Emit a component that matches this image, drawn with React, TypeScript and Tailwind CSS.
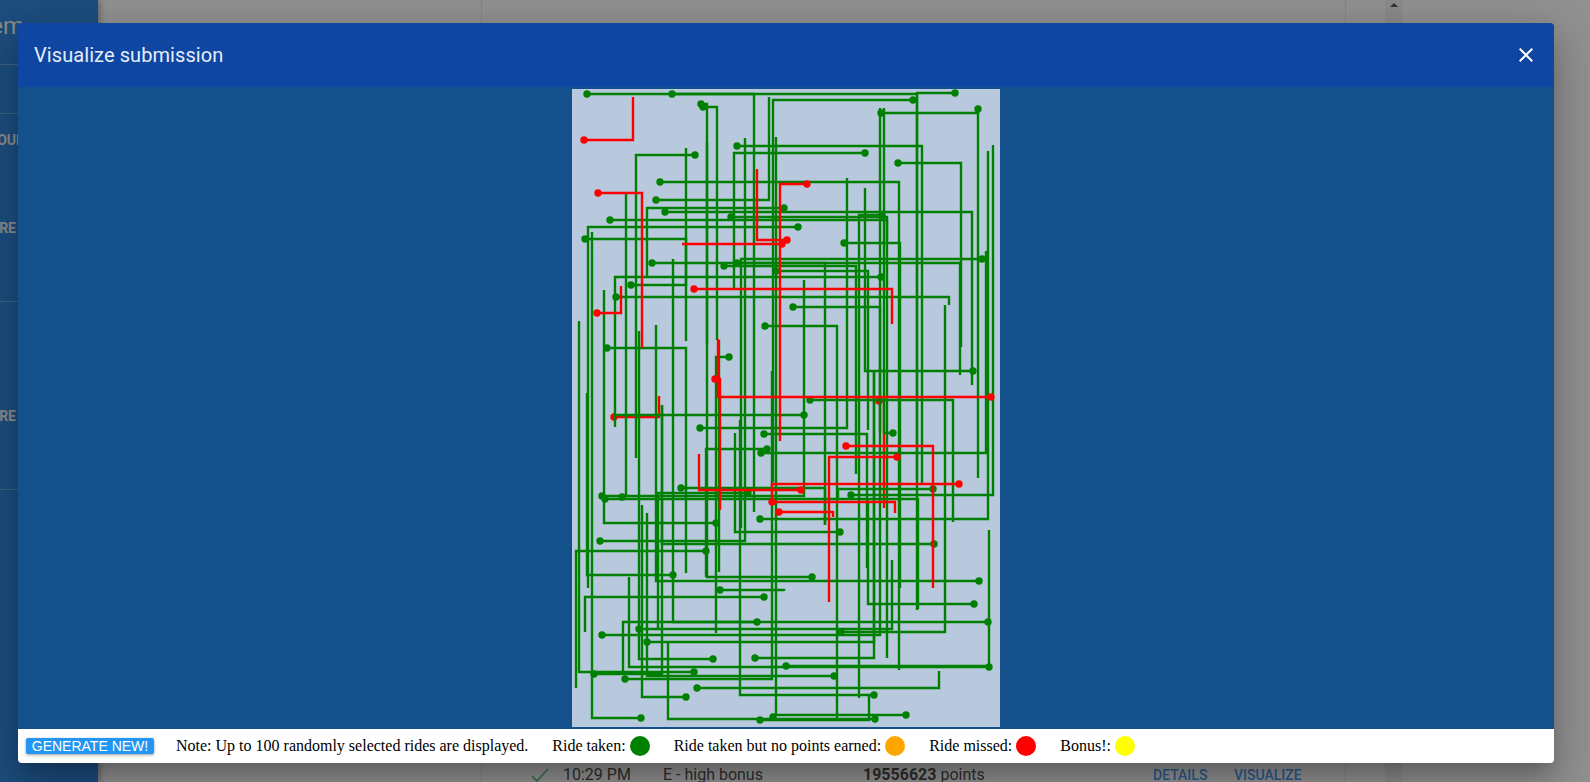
const GREEN_RIDES: number[][] = [
  [587, 94, 754, 512],
  [672, 94, 917, 610],
  [955, 93, 917, 480],
  [913, 100, 773, 482],
  [656, 200, 769, 97],
  [703, 107, 717, 340],
  [701, 104, 707, 344],
  [812, 577, 707, 143],
  [600, 541, 745, 138],
  [881, 113, 978, 478],
  [978, 109, 978, 113],
  [865, 153, 734, 288],
  [695, 155, 636, 458],
  [737, 146, 922, 485],
  [898, 163, 961, 347],
  [906, 715, 776, 137],
  [660, 182, 899, 670],
  [700, 428, 847, 178],
  [973, 371, 865, 188],
  [665, 212, 972, 385],
  [610, 220, 887, 658],
  [731, 217, 887, 240],
  [882, 215, 859, 698],
  [798, 227, 588, 588],
  [585, 239, 686, 341],
  [631, 285, 686, 148],
  [641, 718, 592, 232],
  [844, 243, 900, 588],
  [652, 263, 960, 375],
  [982, 259, 741, 528],
  [724, 266, 856, 474],
  [737, 263, 825, 525],
  [776, 271, 868, 430],
  [784, 208, 647, 277],
  [616, 297, 949, 305],
  [793, 307, 880, 432],
  [765, 326, 837, 718],
  [607, 348, 686, 573],
  [729, 357, 716, 633],
  [810, 400, 953, 522],
  [804, 415, 616, 415],
  [764, 434, 867, 568],
  [893, 433, 884, 108],
  [767, 449, 706, 577],
  [761, 453, 986, 251],
  [681, 488, 825, 525],
  [933, 489, 838, 500],
  [851, 495, 993, 145],
  [602, 496, 804, 280],
  [605, 499, 918, 609],
  [622, 497, 622, 497],
  [748, 493, 658, 628],
  [760, 519, 988, 151],
  [716, 523, 604, 290],
  [840, 532, 735, 433],
  [934, 544, 662, 405],
  [706, 551, 576, 688],
  [673, 575, 587, 393],
  [979, 581, 656, 325],
  [720, 590, 784, 591],
  [764, 597, 585, 632],
  [974, 604, 868, 500],
  [988, 622, 623, 675],
  [757, 622, 673, 259],
  [786, 666, 989, 530],
  [989, 667, 629, 577],
  [639, 629, 892, 560],
  [602, 635, 880, 108],
  [841, 632, 945, 305],
  [647, 642, 874, 372],
  [755, 658, 874, 372],
  [713, 659, 639, 331],
  [694, 672, 579, 321],
  [834, 676, 647, 513],
  [594, 674, 662, 405],
  [625, 679, 772, 371],
  [697, 688, 939, 671],
  [874, 695, 740, 420],
  [686, 697, 642, 505],
  [760, 720, 869, 696],
  [773, 717, 775, 717],
  [875, 719, 668, 641],
];

// rides whose first leg is a longer path
const GREEN_PATHS = ["881,277 615,277 615,427"];
const GREEN_DOTS = [[881, 277]];

// verticals whose dot is hidden under something else
const GREEN_STUBS: number[][] = [
  [626, 194, 497],
  [719, 340, 572],
];

const RED_UNDER: number[][] = [
  [614, 417, 659, 396],
  [879, 401, 884, 508],
];

const RED_RIDES: number[][] = [
  [584, 140, 633, 97],
  [807, 184, 780, 441],
  [787, 240, 757, 169],
  [782, 244, 682, 244],
  [598, 193, 642, 348],
  [694, 289, 892, 324],
  [597, 313, 621, 286],
  [991, 397, 718, 339],
  [715, 379, 720, 510],
  [846, 446, 933, 588],
  [897, 457, 829, 602],
  [801, 490, 699, 454],
  [959, 484, 772, 502],
  [772, 502, 895, 513],
  [779, 512, 833, 517],
];

function Ride({ ride, color }: { ride: number[]; color: string }) {
  const [x0, y0, x1, y1] = ride;
  return (
    <g>
      <polyline
        points={`${x0},${y0} ${x1},${y0} ${x1},${y1}`}
        fill="none"
        stroke={color}
        strokeWidth={2.4}
      />
      <circle cx={x0} cy={y0} r={3.7} fill={color} />
    </g>
  );
}

function RidesCanvas() {
  return (
    <svg
      viewBox="572 89 428 638"
      className="w-[428px] h-[638px] bg-[#b9c9dd] block"
    >
      {RED_UNDER.map((r, i) => (
        <Ride key={i} ride={r} color="#ff0000" />
      ))}
      {GREEN_RIDES.map((r, i) => (
        <Ride key={i} ride={r} color="#008000" />
      ))}
      {GREEN_STUBS.map(([x, a, b], i) => (
        <line key={i} x1={x} y1={a} x2={x} y2={b} stroke="#008000" strokeWidth={2.4} />
      ))}
      {GREEN_PATHS.map((p, i) => (
        <polyline key={i} points={p} fill="none" stroke="#008000" strokeWidth={2.4} />
      ))}
      {GREEN_DOTS.map(([x, y], i) => (
        <circle key={i} cx={x} cy={y} r={3.7} fill="#008000" />
      ))}
      {RED_RIDES.map((r, i) => (
        <Ride key={i} ride={r} color="#ff0000" />
      ))}
    </svg>
  );
}

function LegendItem({ label, color }: { label: string; color: string }) {
  return (
    <div className="flex items-center gap-[4px]">
      <span>{label}</span>
      <span className={`w-[20px] h-[20px] rounded-full ${color}`} />
    </div>
  );
}

function SidebarText({ children, className }: { children: string; className: string }) {
  return (
    <div className={`flex justify-end whitespace-nowrap text-[#8c8c8c] ${className}`}>
      {children}
    </div>
  );
}

function Sidebar() {
  return (
    <div className="w-[98px] shrink-0 h-full bg-[#1c4e7f] shadow-[2px_0_6px_rgba(0,0,0,0.3)] font-['Roboto',sans-serif]">
      <div className="h-[65px] border-b border-[#3f6488] pt-[11px]">
        <SidebarText className="w-[24px] text-[24px] leading-[30px]">System</SidebarText>
      </div>
      <div className="h-[49px] border-b border-[#3f6488]" />
      <div className="h-[188px] border-b border-[#3f6488] pt-[18px]">
        <SidebarText className="w-[25px] text-[14px] leading-[16px] font-bold">YOUR</SidebarText>
        <div className="h-[72px]" />
        <SidebarText className="w-[16px] text-[14px] leading-[16px] font-bold">MORE</SidebarText>
      </div>
      <div className="h-[188px] border-b border-[#3f6488] pt-[106px]">
        <SidebarText className="w-[16px] text-[14px] leading-[16px] font-bold">MORE</SidebarText>
      </div>
    </div>
  );
}

function SubmissionRow() {
  return (
    <div className="flex items-center h-[24px] text-[16px] text-[#2e2e2e] whitespace-nowrap">
      <svg viewBox="0 0 24 24" className="w-[24px] h-[24px] ml-[45px] mr-[12px] text-[#33704a]">
        <path d="M5 13l5 5L21 6" fill="none" stroke="currentColor" strokeWidth={1.6} />
      </svg>
      <div className="w-[100px]">10:29 PM</div>
      <div className="w-[200px]">E - high bonus</div>
      <div className="w-[290px]">
        <span className="font-bold">19556623</span> points
      </div>
      <div className="w-[81px] text-[14px] font-medium text-[#2b5a8c]">DETAILS</div>
      <div className="text-[14px] font-medium text-[#2b5a8c]">VISUALIZE</div>
    </div>
  );
}

function Backdrop() {
  return (
    <div className="flex h-full bg-[#919191]">
      <Sidebar />
      <div className="w-[383px] shrink-0" />
      <div className="w-[865px] shrink-0 h-full border-x border-[#848484] pt-[763px] font-['Roboto',sans-serif]">
        <SubmissionRow />
      </div>
      <div className="w-[39px] shrink-0" />
      <div className="w-[17px] shrink-0 h-full bg-[#8a8a8a] flex justify-center pt-[3px]">
        <div className="w-0 h-0 border-x-[4px] border-x-transparent border-b-[4px] border-b-[#333333]" />
      </div>
    </div>
  );
}

export default function App() {
  return (
    <div className="relative w-[1590px] h-[782px] overflow-hidden">
      <Backdrop />
      <div className="absolute left-[18px] top-[23px] w-[1536px] h-[740px] flex flex-col rounded-[4px] overflow-hidden shadow-[0_11px_15px_-7px_rgba(0,0,0,0.2),0_24px_38px_3px_rgba(0,0,0,0.14),0_9px_46px_8px_rgba(0,0,0,0.12)]">
        <div className="h-[64px] shrink-0 bg-[#0e46a1] flex items-center justify-between pl-[16px] pr-[16px]">
          <h2 className="font-['Roboto',sans-serif] text-[20px] font-normal tracking-[0.08px] text-[#e6edf9]">
            Visualize submission
          </h2>
          <svg viewBox="0 0 24 24" className="w-[24px] h-[24px] text-white">
            <path
              fill="currentColor"
              d="M19 6.41 17.59 5 12 10.59 6.41 5 5 6.41 10.59 12 5 17.59 6.41 19 12 13.41 17.59 19 19 17.59 13.41 12z"
            />
          </svg>
        </div>
        <div className="h-[642px] shrink-0 bg-[#14508c] flex items-center justify-center">
          <RidesCanvas />
        </div>
        <div className="flex-1 bg-white flex items-center pl-[8px] text-[16px] text-black font-['Liberation_Serif',serif] whitespace-nowrap">
          <button className="w-[128px] h-[16px] mr-[22px] rounded-[2px] bg-[#2196f3] text-white text-[14px] leading-[16px] font-['Liberation_Sans',sans-serif] shadow-[0_1px_3px_rgba(0,0,0,0.4)]">
            GENERATE NEW!
          </button>
          <div className="flex items-center gap-[24px]">
            <span>Note: Up to 100 randomly selected rides are displayed.</span>
            <LegendItem label="Ride taken:" color="bg-[#008000]" />
            <LegendItem label="Ride taken but no points earned:" color="bg-[#ffa500]" />
            <LegendItem label="Ride missed:" color="bg-[#ff0000]" />
            <LegendItem label="Bonus!:" color="bg-[#ffff00]" />
          </div>
        </div>
      </div>
    </div>
  );
}
